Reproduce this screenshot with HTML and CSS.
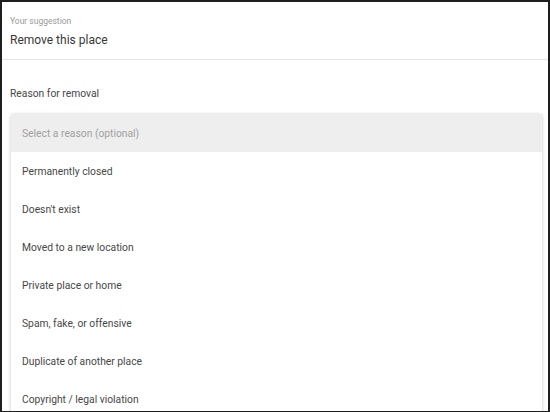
FILE: index.html
```html
<!DOCTYPE html>
<html>
<head>
<meta charset="utf-8">
<link rel="stylesheet" href="styles.css">
</head>
<body>
<div class="frame">
  <div class="suggestion">
    <div class="label">Your suggestion</div>
    <div class="value">Remove this place</div>
  </div>
  <div class="reason">
    <div class="reason-label">Reason for removal</div>
    <div class="menu">
      <div class="menu-head">Select a reason (optional)</div>
      <div class="item">Permanently closed</div>
      <div class="item">Doesn't exist</div>
      <div class="item">Moved to a new location</div>
      <div class="item">Private place or home</div>
      <div class="item">Spam, fake, or offensive</div>
      <div class="item">Duplicate of another place</div>
      <div class="item">Copyright / legal violation</div>
    </div>
  </div>
</div>
</body>
</html>
```

FILE: styles.css
```css
html, body {
  margin: 0;
  padding: 0;
  background: #fff;
}
body {
  font-family: Roboto, "Open Sans", Arial, sans-serif;
  color: #3c3c3c;
}
.frame {
  box-sizing: border-box;
  width: 550px;
  height: 412px;
  border: 2px solid #1e1e1e;
  border-bottom-width: 1px;
  overflow: hidden;
  background: #fff;
}
.suggestion {
  padding: 13px 0 0 8px;
  height: 44px;
  border-bottom: 1px solid #e6e6e6;
}
.label {
  font-size: 8.5px;
  color: #9a9a9a;
  line-height: 12px;
}
.value {
  font-size: 12px;
  line-height: 18px;
  margin-top: 4px;
  color: #383838;
}
.reason {
  padding: 27px 0 0 0;
}
.reason-label {
  font-size: 10.3px;
  line-height: 14px;
  padding-left: 8px;
  color: #474747;
}
.menu {
  margin: 13px 6px 0 9px;
  background: #fff;
  box-shadow: 0 1px 4px rgba(0,0,0,0.18), 0 0 2px rgba(0,0,0,0.08);
  border-radius: 2px 2px 0 0;
}
.menu-head {
  height: 38px;
  line-height: 39px;
  background: #eeeeee;
  color: #a0a0a0;
  font-size: 10.3px;
  padding-left: 11px;
}
.item {
  height: 38px;
  line-height: 39px;
  font-size: 10.3px;
  color: #474747;
  padding-left: 11px;
}
```
